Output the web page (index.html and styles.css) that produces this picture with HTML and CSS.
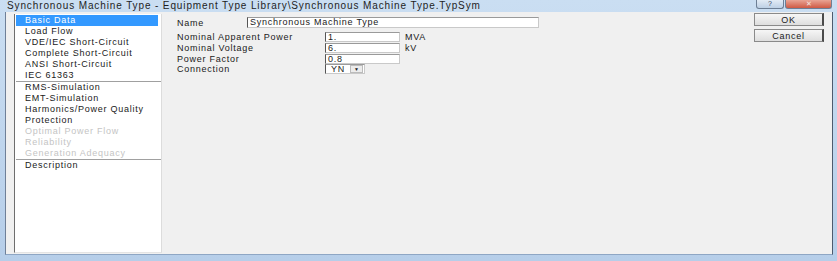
FILE: index.html
```html
<!DOCTYPE html>
<html lang="en">
<head>
<meta charset="UTF-8">
<title>Synchronous Machine Type</title>
<link rel="stylesheet" href="styles.css">
</head>
<body>
<div class="window">
  <div class="titlebar">
    <span class="title">Synchronous Machine Type - Equipment Type Library\Synchronous Machine Type.TypSym</span>
    <div class="caption-buttons">
      <span class="cap-btn help">?</span>
      <span class="cap-btn close">&#x2715;</span>
    </div>
  </div>
  <div class="client">
    <ul class="pages">
      <li class="selected">Basic Data</li>
      <li>Load Flow</li>
      <li>VDE/IEC Short-Circuit</li>
      <li>Complete Short-Circuit</li>
      <li>ANSI Short-Circuit</li>
      <li class="group-end">IEC 61363</li>
      <li>RMS-Simulation</li>
      <li>EMT-Simulation</li>
      <li>Harmonics/Power Quality</li>
      <li>Protection</li>
      <li class="disabled">Optimal Power Flow</li>
      <li class="disabled">Reliability</li>
      <li class="disabled group-end">Generation Adequacy</li>
      <li>Description</li>
    </ul>
    <div class="form">
      <div class="name-row">
        <label>Name</label>
        <div class="field name-field">Synchronous Machine Type</div>
      </div>
      <div class="grid">
        <label>Nominal Apparent Power</label>
        <div class="field">1.</div>
        <span class="unit">MVA</span>
        <label>Nominal Voltage</label>
        <div class="field">6.</div>
        <span class="unit">kV</span>
        <label>Power Factor</label>
        <div class="field">0.8</div>
        <span class="unit"></span>
        <label>Connection</label>
        <div class="field combo">YN <span class="drop">&#9660;</span></div>
        <span class="unit"></span>
      </div>
    </div>
    <div class="buttons">
      <button>OK</button>
      <button>Cancel</button>
    </div>
  </div>
</div>
</body>
</html>
```

FILE: styles.css
```css
body {
  margin: 0;
  width: 837px;
  height: 261px;
  overflow: hidden;
  font-family: "Liberation Sans", Arial, sans-serif;
  background: #b9d1ea;
}
.window {
  height: 261px;
  display: flex;
  flex-direction: column;
  background: linear-gradient(#cadef2, #b6cee9);
}
.titlebar {
  height: 12px;
  display: flex;
  align-items: flex-start;
  justify-content: space-between;
  padding-left: 7px;
}
.title {
  font-size: 10px;
  letter-spacing: 0.88px;
  line-height: 11px;
  color: #1e1e1e;
  white-space: nowrap;
}
.caption-buttons {
  display: flex;
  margin-right: 5px;
}
.cap-btn {
  height: 8px;
  font-size: 7px;
  line-height: 8px;
  text-align: center;
  color: #f4e4e0;
  border: 1px solid #6d7f95;
  border-top: none;
  border-radius: 0 0 3px 3px;
}
.help {
  width: 26px;
  background: linear-gradient(#e2ebf5, #bdd0e5);
  color: #3a4d66;
}
.close {
  width: 45px;
  margin-left: 1px;
  background: linear-gradient(#e9a494, #cf5a44);
}
.client {
  flex: 1;
  margin: 0 4px 6px 5px;
  background: #f0f0f0;
  border-left: 1px solid #6f8098;
  border-right: 1px solid #4d5b6e;
  border-bottom: 1px solid #8ea6c4;
  display: flex;
  align-items: flex-start;
}
.pages {
  list-style: none;
  margin: 2px 0 0 8px;
  padding: 1px 3px 0 1px;
  width: 142px;
  height: 237px;
  background: #fff;
  border-left: 1px solid #6e6e6e;
  border-bottom: 1px solid #e4e4e4;
  border-right: 1px solid #dcdcdc;
  font-size: 9px;
  letter-spacing: 0.75px;
}
.pages li {
  height: 11px;
  line-height: 11px;
  padding-left: 9px;
  color: #1a1a1a;
  white-space: nowrap;
}
.pages li.selected {
  background: #3399ff;
  color: #fff;
}
.pages li.disabled {
  color: #c4c4c4;
}
.pages li.group-end {
  border-bottom: 1px solid #a0a0a0;
  margin-right: -3px;
}
.form {
  margin: 5px 0 0 15px;
  font-size: 9px;
  letter-spacing: 0.75px;
  color: #1a1a1a;
}
.name-row {
  display: flex;
  align-items: center;
  height: 11px;
  margin-bottom: 4px;
}
.name-row label {
  width: 70px;
}
.field {
  height: 8px;
  line-height: 8px;
  background: #fff;
  border: 1px solid #c9c9c9;
  border-left-color: #555;
  border-top-color: #9a9a9a;
  padding-left: 2px;
  white-space: nowrap;
}
.name-field {
  width: 288px;
  height: 9px;
  line-height: 9px;
}
.grid {
  display: grid;
  grid-template-columns: 148px 75px auto;
  grid-auto-rows: 10.7px;
  align-items: center;
}
.unit {
  padding-left: 5px;
}
.combo {
  width: 33px;
  display: flex;
  justify-content: space-between;
  align-items: center;
  padding-left: 5px;
}
.drop {
  width: 11px;
  height: 6px;
  font-size: 5px;
  line-height: 6px;
  text-align: center;
  letter-spacing: 0;
  border: 1px solid #bbb;
  background: #ececec;
  margin-right: 1px;
}
.buttons {
  margin: 1px 8px 0 auto;
  display: flex;
  flex-direction: column;
  gap: 3px;
}
.buttons button {
  width: 70px;
  height: 13px;
  padding: 0;
  font-family: "Liberation Sans", Arial, sans-serif;
  font-size: 9px;
  letter-spacing: 0.75px;
  line-height: 10px;
  color: #1a1a1a;
  background: linear-gradient(#f6f6f6, #dedede);
  border: 1px solid #8a8a8a;
  border-right: 2px solid #4a4a4a;
  border-radius: 0;
}
```
